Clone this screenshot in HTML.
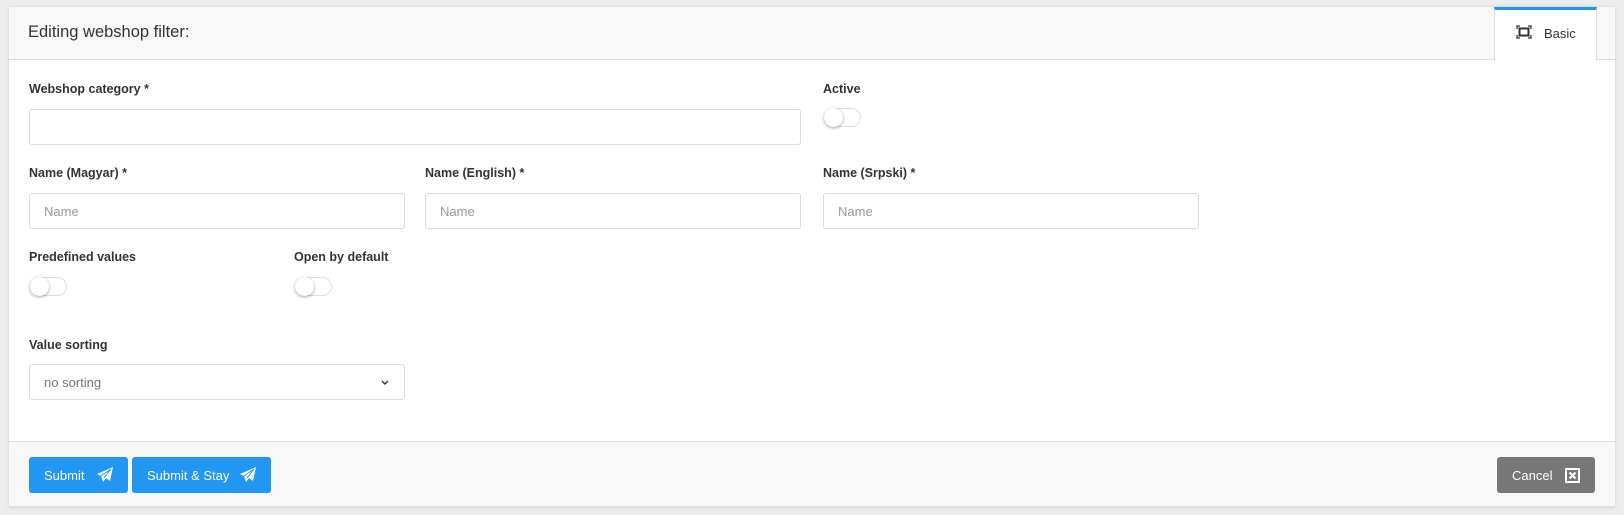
<!DOCTYPE html>
<html><head><style>
*{box-sizing:border-box;margin:0;padding:0}
body{width:1624px;height:515px;background:#ededed;font-family:"Liberation Sans",sans-serif;position:relative;overflow:hidden}
.panel{position:absolute;left:8px;top:6px;width:1608px;height:501px;background:#fff;border:1px solid #e0e0e0;border-radius:3px;box-shadow:0 1px 3px rgba(0,0,0,.08)}
.head{position:absolute;left:0;top:0;right:0;height:53px;background:#f8f8f8;border-bottom:1px solid #ddd}
.head h1{position:absolute;left:19px;top:16px;font-size:16.5px;font-weight:normal;color:#333}
.tab{position:absolute;left:1485px;top:0;width:103px;height:54px;background:#fff;border-top:3px solid #2196f3;border-left:1px solid #ddd;border-right:1px solid #ddd}
.tab span{position:absolute;left:49px;top:16px;font-size:13px;color:#333}
.lbl{position:absolute;font-size:12.5px;font-weight:bold;color:#333}
.inp{position:absolute;height:36px;border:1px solid #ddd;border-radius:3px;background:#fff;font-size:13px;color:#999;padding:10px 14px}
.tg{position:absolute;width:37px;height:19px;border:1px solid #ddd;border-radius:10px;background:#fff}
.tg::after{content:"";position:absolute;left:-1px;top:-1px;width:19px;height:19px;border-radius:50%;background:#fff;box-shadow:0 1px 3px rgba(0,0,0,.35)}
.foot{position:absolute;left:0;right:0;top:434px;bottom:0;background:#f8f8f8;border-top:1px solid #ddd}
.btn{position:absolute;top:15px;height:36px;border-radius:3px;color:#fff;font-size:13px;padding:11px 15px}
.blue{background:#2196f3}
.grey{background:#777}
.btn svg{position:absolute;top:10px}
</style></head><body>
<div class="panel">
 <div class="head"><h1>Editing webshop filter:</h1>
  <div class="tab"><svg style="position:absolute;left:21px;top:15px" width="16" height="14" viewBox="0 0 16 14"><path d="M1 4V1h3M12 1h3v3M15 10v3h-3M4 13H1v-3" fill="none" stroke="#333" stroke-width="1.3"/><rect x="3.5" y="3.5" width="9" height="7" fill="none" stroke="#333" stroke-width="2"/></svg><span>Basic</span></div>
 </div>
 <div class="lbl" style="left:20px;top:75px">Webshop category *</div>
 <div class="inp" style="left:20px;top:102px;width:772px"></div>
 <div class="lbl" style="left:814px;top:75px">Active</div>
 <div class="tg" style="left:815px;top:101px"></div>
 <div class="lbl" style="left:20px;top:159px">Name (Magyar) *</div>
 <div class="inp" style="left:20px;top:186px;width:376px">Name</div>
 <div class="lbl" style="left:416px;top:159px">Name (English) *</div>
 <div class="inp" style="left:416px;top:186px;width:376px">Name</div>
 <div class="lbl" style="left:814px;top:159px">Name (Srpski) *</div>
 <div class="inp" style="left:814px;top:186px;width:376px">Name</div>
 <div class="lbl" style="left:20px;top:243px">Predefined values</div>
 <div class="tg" style="left:21px;top:270px"></div>
 <div class="lbl" style="left:285px;top:243px">Open by default</div>
 <div class="tg" style="left:286px;top:270px"></div>
 <div class="lbl" style="left:20px;top:331px">Value sorting</div>
 <div class="inp" style="left:20px;top:357px;width:376px;color:#777">no sorting<svg style="position:absolute;right:15px;top:15px" width="8" height="6" viewBox="0 0 8 6"><path d="M1 1l3 3 3-3" fill="none" stroke="#333" stroke-width="1.4"/></svg></div>
 <div class="foot">
  <div class="btn blue" style="left:20px;width:99px">Submit<svg style="left:68px" width="17" height="16" viewBox="0 0 17 16"><path d="M16 0L0 7l4 2 2 6 3-4 4 3z" fill="#fff"/><path d="M4 9l10-7-7 9" fill="none" stroke="#2196f3" stroke-width="1"/></svg></div>
  <div class="btn blue" style="left:123px;width:139px">Submit &amp; Stay<svg style="left:108px" width="17" height="16" viewBox="0 0 17 16"><path d="M16 0L0 7l4 2 2 6 3-4 4 3z" fill="#fff"/><path d="M4 9l10-7-7 9" fill="none" stroke="#2196f3" stroke-width="1"/></svg></div>
  <div class="btn grey" style="left:1488px;width:98px">Cancel<svg style="left:68px;top:11px" width="15" height="15" viewBox="0 0 15 15"><rect x="1" y="1" width="13" height="13" fill="none" stroke="#fff" stroke-width="2"/><path d="M4.5 4.5l6 6M10.5 4.5l-6 6" stroke="#fff" stroke-width="2.2"/></svg></div>
 </div>
</div>
</body></html>
